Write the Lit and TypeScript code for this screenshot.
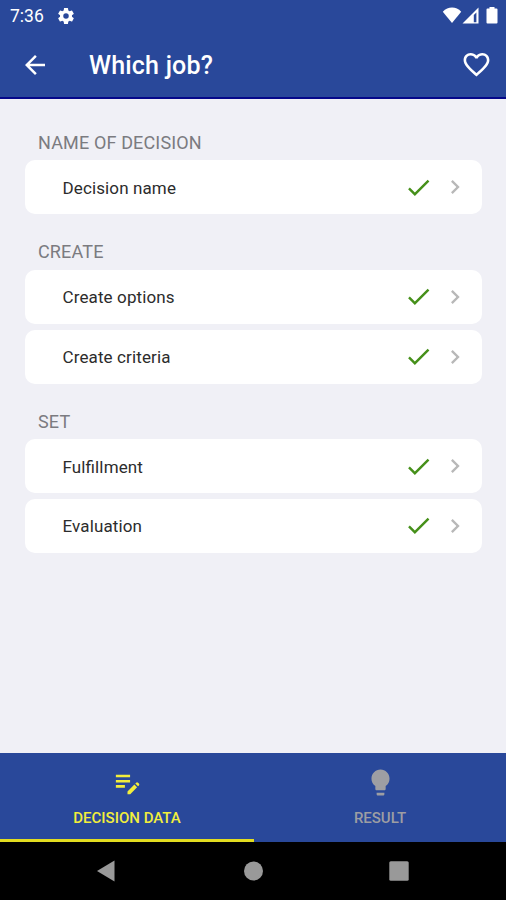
import { LitElement, html, css, svg } from "lit";
import { customElement } from "lit/decorators.js";

const icons = {
  gear: svg`<path d="M19.14 12.94c.04-.3.06-.61.06-.94s-.02-.64-.07-.94l2.03-1.58a.49.49 0 0 0 .12-.61l-1.92-3.32a.49.49 0 0 0-.59-.22l-2.39.96c-.5-.38-1.03-.7-1.62-.94l-.36-2.54a.48.48 0 0 0-.48-.41h-3.84c-.24 0-.43.17-.47.41l-.36 2.54c-.59.24-1.13.57-1.62.94l-2.39-.96a.48.48 0 0 0-.59.22L2.74 8.87a.48.48 0 0 0 .12.61l2.03 1.58c-.05.3-.09.63-.09.94s.02.64.07.94l-2.03 1.58a.49.49 0 0 0-.12.61l1.92 3.32c.12.22.37.29.59.22l2.39-.96c.5.38 1.03.7 1.62.94l.36 2.54c.05.24.24.41.48.41h3.84c.24 0 .44-.17.47-.41l.36-2.54c.59-.24 1.13-.56 1.62-.94l2.39.96c.22.08.47 0 .59-.22l1.92-3.32a.48.48 0 0 0-.12-.61zM12 15.3a3.3 3.3 0 1 1 0-6.600 3.300 3.300 0 0 1 0 6.600z"/>`,
  back: svg`<path d="M20 11H7.83l5.59-5.59L12 4l-8 8 8 8 1.41-1.41L7.83 13H20z"/>`,
  heart: svg`<path d="M16.5 3c-1.74 0-3.41.81-4.5 2.09C10.91 3.81 9.24 3 7.5 3 4.42 3 2 5.42 2 8.5c0 3.78 3.4 6.86 8.55 11.54L12 21.35l1.45-1.32C18.6 15.36 22 12.28 22 8.5 22 5.42 19.58 3 16.5 3zm-4.4 15.55-.1.1-.1-.1C7.14 14.24 4 11.39 4 8.5 4 6.5 5.5 5 7.5 5c1.54 0 3.04.99 3.57 2.36h1.87C13.46 5.99 14.96 5 16.5 5c2 0 3.5 1.5 3.5 3.5 0 2.89-3.14 5.74-7.9 10.05z"/>`,
  check: svg`<path d="M9 16.17 4.83 12l-1.42 1.41L9 19 21 7l-1.41-1.41z"/>`,
  chevron: svg`<path d="M10 6 8.59 7.41 13.17 12l-4.58 4.59L10 18l6-6z"/>`,
  note: svg`<path d="M3 10h11v2H3zm0-4h11v2H3zm0 8h7v2H3zm15.01-1.13.71-.71a1 1 0 0 1 1.41 0l.71.71a1 1 0 0 1 0 1.41l-.71.71zm-.71.71-5.3 5.3V21h2.12l5.3-5.3z"/>`,
  bulb: svg`<path d="M9 21c0 .55.45 1 1 1h4c.55 0 1-.45 1-1v-1H9zm3-19C8.14 2 5 5.14 5 9c0 2.38 1.19 4.47 3 5.74V17c0 .55.45 1 1 1h6c.55 0 1-.45 1-1v-2.26c1.81-1.27 3-3.36 3-5.74 0-3.86-3.14-7-7-7z"/>`,
};

const icon = (name: keyof typeof icons) =>
  html`<svg class="icon ${name}" viewBox="0 0 24 24">${icons[name]}</svg>`;

const sections = [
  { title: "NAME OF DECISION", rows: ["Decision name"] },
  { title: "CREATE", rows: ["Create options", "Create criteria"] },
  { title: "SET", rows: ["Fulfillment", "Evaluation"] },
];

@customElement("app-root")
export class AppRoot extends LitElement {
  static styles = css`
    :host {
      display: flex;
      flex-direction: column;
      height: 900px;
      background: #f0f0f6;
      font-family: Roboto, "Liberation Sans", sans-serif;
    }
    * { box-sizing: border-box; }
    svg { display: block; flex: none; }
    .icon { fill: currentColor; }
    .top {
      height: 99px;
      flex: none;
      background: #29489a;
      border-bottom: 2px solid #05088a;
      color: #fff;
    }
    .status {
      height: 31px;
      display: flex;
      align-items: center;
      padding: 0 7px 0 10px;
    }
    .time { font-size: 17.5px; width: 46px; line-height: 31px; padding-top: 1px; }
    .gear { width: 20px; height: 20px; }
    .signals { margin-left: auto; }
    .bar {
      height: 67px;
      display: flex;
      align-items: center;
      padding: 0 14px 0 20px;
    }
    .back { width: 30px; height: 30px; }
    .title {
      flex: 1;
      margin: 0 0 0 39px;
      font-size: 25px;
      font-weight: 500;
      letter-spacing: 0.2px;
      line-height: 30px;
      padding-top: 2px;
    }
    .heart { width: 31px; height: 31px; }
    .content { flex: 1; padding: 29.8px 24px 0 25px; }
    .section { margin-bottom: 24px; }
    .heading {
      margin: 0 0 3.7px 13px;
      font-size: 18px;
      font-weight: 400;
      letter-spacing: 0.15px;
      line-height: 28px;
      color: #7b7b80;
    }
    .rows { display: flex; flex-direction: column; gap: 6px; }
    .row {
      height: 53.8px;
      display: flex;
      align-items: center;
      background: #fff;
      border-radius: 10px;
      padding: 0 13px 0 37.5px;
      color: #2c2c2c;
    }
    .label {
      flex: 1;
      font-size: 17px;
      letter-spacing: 0.12px;
      line-height: 24px;
      font-feature-settings: "liga" 1;
      padding-top: 1px;
    }
    .check { width: 29px; height: 29px; color: #46901a; margin-right: 8.5px; }
    .chevron { width: 28px; height: 28px; color: #b8b8b8; }
    .tabs { height: 89px; flex: none; display: flex; background: #29489a; }
    .tab {
      flex: 1;
      display: flex;
      flex-direction: column;
      align-items: center;
      padding-top: 13.5px;
      font-size: 15px;
      font-weight: 500;
      line-height: 20px;
      color: #9d9ea3;
      border-bottom: 3px solid transparent;
    }
    .tab .icon { width: 31px; height: 31px; margin-bottom: 10.5px; }
    .tab.active { flex: none; width: 254px; color: #f2ee3c; border-bottom-color: #e2dc20; }
    .nav { height: 58px; flex: none; background: #000; display: flex; justify-content: center; align-items: center; gap: 126px; }
    .nav svg { width: 20px; height: 22px; fill: #999; }
  `;

  render() {
    return html`
      <header class="top">
        <div class="status">
          <span class="time">7:36</span>
          ${icon("gear")}
          <svg class="signals" width="57" height="17" viewBox="0 0 57 17" fill="#fff">
            <path d="M.8 4.7C6-.8 14.200-.8 19.200 4.700L10 16z" />
            <path fill-rule="evenodd" d="M20.500 16.500 36.500.5v16zM31.800 8v7.300h2.600V5.400z" />
            <path d="M47.500 1.500v-1.500h5v1.500h2q1 0 1 1v13q0 1-1 1h-9q-1 0-1-1v-13q0-1 1-1z" />
          </svg>
        </div>
        <div class="bar">
          ${icon("back")}
          <h1 class="title">Which job?</h1>
          ${icon("heart")}
        </div>
      </header>
      <main class="content">
        ${sections.map(
          (s) => html`<section class="section">
            <h2 class="heading">${s.title}</h2>
            <div class="rows">
              ${s.rows.map(
                (r) => html`<div class="row"><span class="label">${r}</span>${icon("check")}${icon("chevron")}</div>`
              )}
            </div>
          </section>`
        )}
      </main>
      <nav class="tabs">
        <div class="tab active">${icon("note")}<span>DECISION DATA</span></div>
        <div class="tab">${icon("bulb")}<span>RESULT</span></div>
      </nav>
      <footer class="nav">
        <svg viewBox="0 0 20 22"><path d="M0 11 17.500.5v21z" /></svg>
        <svg viewBox="0 0 20 22"><circle cx="10.500" cy="11" r="9.500" /></svg>
        <svg viewBox="0 0 20 22"><rect x=".3" y="1.300" width="19.400" height="19.400" rx="1.500" /></svg>
      </footer>
    `;
  }
}
